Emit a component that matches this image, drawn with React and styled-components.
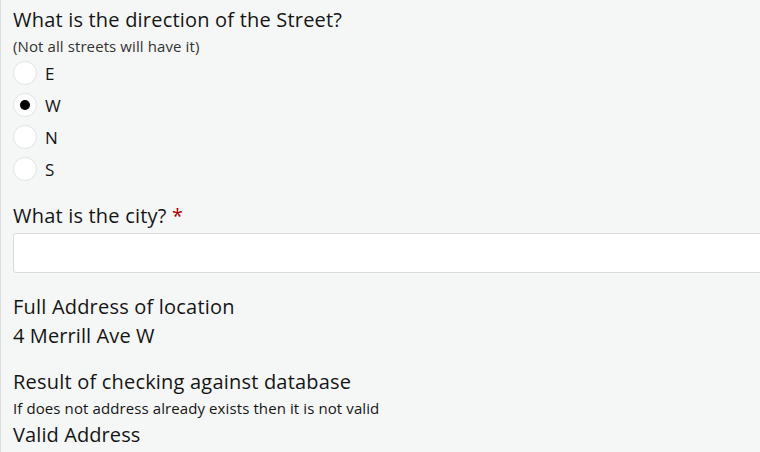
import React, { useState } from 'react'
import styled, { createGlobalStyle } from "styled-components";

const Global = createGlobalStyle`
  html, body {
    margin: 0;
    padding: 0;
    background: #f5f7f7;
  }
  body {
    font-family: "Open Sans", "Noto Sans", sans-serif;
    color: #151515;
  }
`

const directions = ["E", "W", "N", "S"];

function App() {
    const [dir, setDir] = useState("W");
    return (
        <Page>
            <Global />
            <Question>
                <Label>What is the direction of the Street?</Label>
                <Hint>(Not all streets will have it)</Hint>
                <RadioList>
                    {directions.map((d) => (
                        <RadioRow key={d} onClick={() => setDir(d)}>
                            <Circle $checked={dir === d} />
                            <span>{d}</span>
                        </RadioRow>
                    ))}
                </RadioList>
            </Question>

            <Question>
                <Label>What is the city? <Required>*</Required></Label>
                <TextInput type="text" />
            </Question>

            <Question>
                <Label>Full Address of location</Label>
                <Value>4 Merrill Ave W</Value>
            </Question>

            <Question $offset={1}>
                <Label>Result of checking against database</Label>
                <Hint $dark>If does not address already exists then it is not valid</Hint>
                <Value>Valid Address</Value>
            </Question>
        </Page>
    )
}

const Page = styled.main`
    border-left: 1px solid #dcdcdc;
    min-height: 452px;
    box-sizing: border-box;
    padding: 5px 0 0 12px;
    display: flex;
    flex-direction: column;
    gap: 16px;
`

const Question = styled.section`
    display: flex;
    flex-direction: column;
    margin-top: ${(p) => p.$offset || 0}px;
`

const Label = styled.div`
    font-size: 20px;
    line-height: 30px;
    letter-spacing: 0.2px;
`

const Required = styled.span`
    color: #a80000;
`

const Hint = styled.div`
    font-size: 15px;
    line-height: 22px;
    letter-spacing: 0.1px;
    color: ${(p) => (p.$dark ? "#151515" : "#333")};
    margin-bottom: ${(p) => (p.$dark ? "2px" : "0")};
`

const RadioList = styled.div`
    display: flex;
    flex-direction: column;
`

const RadioRow = styled.label`
    display: flex;
    align-items: center;
    gap: 8px;
    height: 32px;
    font-size: 17px;
    cursor: pointer;
`

const Circle = styled.span`
    width: 24px;
    height: 24px;
    box-sizing: border-box;
    border-radius: 50%;
    border: 1px solid #e3e3e3;
    background: #fff;
    display: flex;
    align-items: center;
    justify-content: center;
    &::after {
        content: "";
        width: 10px;
        height: 10px;
        border-radius: 50%;
        background: #000;
        display: ${(p) => (p.$checked ? "block" : "none")};
    }
`

const TextInput = styled.input`
    margin: 2px 0 3px;
    height: 40px;
    width: 780px;
    box-sizing: border-box;
    border: 1px solid #dadada;
    border-radius: 3px;
    background: #fff;
    font-size: 16px;
    padding: 0 10px;
    outline: none;
`

const Value = styled.div`
    font-size: 20px;
    line-height: 28px;
    letter-spacing: 0.1px;
`

export default App
